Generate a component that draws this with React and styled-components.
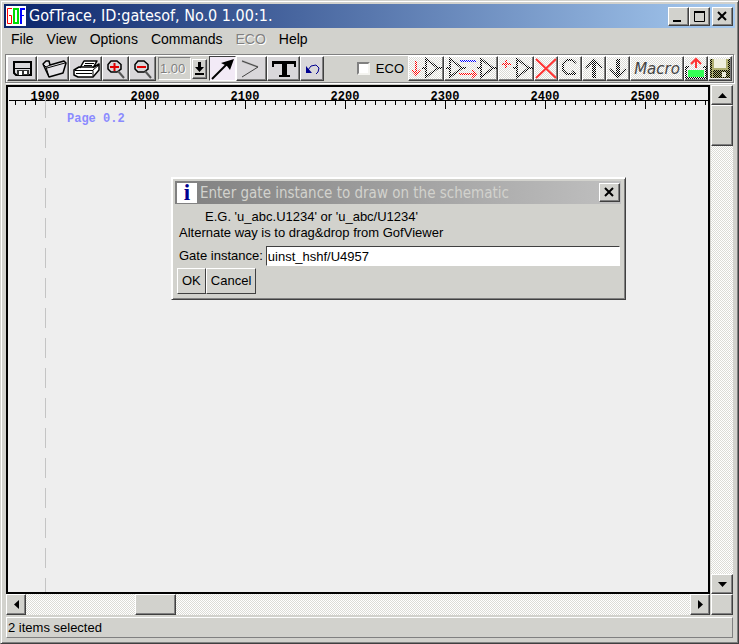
import React from "react";
import styled, { createGlobalStyle, css } from "styled-components";

const FACE = "#d2d2cd";
const DARK = "#404040";
const SHADE = "#808080";

const GlobalStyle = createGlobalStyle`
  * { box-sizing: border-box; }
  body { margin: 0; background: ${FACE}; }
  button, input { font: inherit; color: inherit; }
`;

const raised = css`
  background: ${FACE};
  border: 1px solid;
  border-color: #fff ${DARK} ${DARK} #fff;
  box-shadow: inset -1px -1px 0 ${SHADE};
`;

const Window = styled.main`
  display: flex;
  flex-direction: column;
  min-height: 100vh;
  padding: 2px;
  background: ${FACE};
  border: 1px solid;
  border-color: ${FACE} ${DARK} ${DARK} ${FACE};
  box-shadow: inset 1px 1px 0 #fff, inset -1px -1px 0 ${SHADE};
  font: 13px/16px "Liberation Sans", Arial, sans-serif;
  color: #000;
`;

const TitleBar = styled.header`
  display: flex;
  align-items: center;
  gap: 3px;
  height: 24px;
  margin: 1px 1px 0;
  padding: 0 2px;
  background: linear-gradient(90deg, #0a246a, #a6caf0);
  color: #fff;
`;

const Title = styled.h1`
  flex: 1;
  margin: 0;
  font: 500 ${(p) => p.$size || 16}px/22px "DejaVu Sans Condensed", "DejaVu Sans", sans-serif;
  white-space: nowrap;
`;

const Captions = styled.div`
  display: flex;
  gap: ${(p) => p.$gap || 0}px;
`;

const CaptionButton = styled.button`
  ${raised}
  width: 21px;
  height: 19px;
  padding: 0;
  svg { display: block; }
`;

const MenuBar = styled.nav`
  display: flex;
  gap: 11px;
  height: 26px;
  padding: 0 7px;
  font-size: 14px;
`;

const MenuItem = styled.button`
  padding: 0 1px 4px;
  border: 0;
  background: none;
  &:disabled { color: ${SHADE}; text-shadow: 1px 1px 0 #fff; }
`;

const ToolBar = styled.div`
  display: flex;
  align-items: center;
  height: 29px;
  margin: 0 2px;
  padding: 0 1px;
  border: 1px solid ${SHADE};
  box-shadow: inset 1px 1px 0 #fff, 1px 1px 0 #fff;
`;

const Tool = styled.button`
  ${raised}
  flex: none;
  width: ${(p) => p.$w}px;
  height: 25px;
  padding: 0;
  background: ${(p) => (p.$on ? "#f2eaf6" : "#d9d7da")};
  ${(p) => p.$on && `border-color: ${DARK} #fff #fff ${DARK}; box-shadow: none;`}
  svg { display: block; margin: -1px; }
`;

const DimTool = styled(Tool)`
  background: repeating-conic-gradient(#fff 0 25%, #dadad5 0 50%) 0 0 / 2px 2px;
  font: italic 15px/22px "DejaVu Sans", sans-serif;
  color: #444;
`;

const ScaleInput = styled.input`
  width: 33px;
  height: 23px;
  margin: 0 1px 0 2px;
  padding: 0 1px;
  border: 1px solid;
  border-color: ${SHADE} #fff #fff ${SHADE};
  background: ${FACE};
  &:disabled { color: ${SHADE}; text-shadow: 1px 1px 0 #fff; }
`;

const DropButton = styled.button`
  ${raised}
  width: 15px;
  height: 20px;
  margin-right: 2px;
  padding: 0;
  svg { display: block; }
`;

const EcoLabel = styled.label`
  display: flex;
  align-items: center;
  gap: 6px;
  margin-left: auto;
  padding-right: 4px;
`;

const EcoBox = styled.input`
  appearance: none;
  width: 13px;
  height: 13px;
  margin: 0;
  background: #fff;
  border: 2px solid;
  border-color: ${SHADE} #f4f4f0 #f4f4f0 ${SHADE};
`;

const Workspace = styled.div`
  flex: 1;
  display: grid;
  grid-template-columns: minmax(0, 1fr) 22px;
  grid-template-rows: minmax(0, 1fr) 21px;
  column-gap: 1px;
  margin: 2px 3px 0;
`;

const Canvas = styled.section`
  position: relative;
  overflow: hidden;
  border: 2px solid #000;
  background: #eee;
  font: bold 12px/14px "Liberation Mono", monospace;
`;

const Ruler = styled.div`
  display: flex;
  height: 22px;
  margin-left: -13px;
  padding-top: 3px;
  overflow: hidden;
  background:
    linear-gradient(#000, #000) 14px 13px / 100% 1px no-repeat,
    repeating-linear-gradient(90deg, #000 0 1px, transparent 1px 100px) 50px 13px / 100% 10px no-repeat,
    repeating-linear-gradient(90deg, #000 0 1px, transparent 1px 10px) 20px 13px / 100% 5px no-repeat;
`;

const Mark = styled.span`
  flex: 0 0 100px;
  text-align: center;
`;

const PageEdge = styled.div`
  position: absolute;
  top: 11px;
  bottom: 0;
  left: 37px;
  width: 1px;
  background: repeating-linear-gradient(#c4c4c4 0 20px, transparent 20px 30px);
`;

const PageName = styled.div`
  margin: 3px 0 0 59px;
  color: #8a8aff;
`;

const ScrollBar = styled.div`
  display: flex;
  flex-direction: ${(p) => (p.$vertical ? "column" : "row")};
  background: repeating-conic-gradient(#fff 0 25%, #dcdcd6 0 50%) 0 0 / 2px 2px;
`;

const ScrollArrow = styled.button`
  ${raised}
  flex: 0 0 20px;
  display: grid;
  place-items: center;
  padding: 0;
`;

const Thumb = styled.div`
  ${raised}
  flex: 0 0 41px;
`;

const Trough = styled.div`
  flex: ${(p) => p.$size || "1"};
`;

const Corner = styled.div`
  ${raised}
`;

const StatusBar = styled.footer`
  height: 21px;
  margin: 2px 3px 3px;
  padding: 2px 1px;
  border: 1px solid;
  border-color: #fff ${SHADE} ${SHADE} #fff;
`;

const Dialog = styled.section`
  ${raised}
  position: absolute;
  top: 90px;
  left: 163px;
  width: 455px;
  padding: 3px 4px 5px 3px;
  box-shadow: inset 1px 1px 0 #fff, inset -1px -1px 0 ${SHADE};
  font: 13px/16px "Liberation Sans", Arial, sans-serif;
`;

const DialogTitleBar = styled(TitleBar)`
  margin: 0;
  height: 23px;
  padding-right: 1px;
  background: linear-gradient(90deg, #808080, #c0c0c0);
  color: ${FACE};
`;

const InfoIcon = styled.span`
  width: 20px;
  height: 20px;
  background: #fff;
  color: #000090;
  text-align: center;
  font: bold 23px/20px "Liberation Serif", serif;
`;

const Hint = styled.p`
  margin: 0 0 0 4px;
  padding-top: ${(p) => (p.$first ? 5 : 0)}px;
  text-indent: ${(p) => (p.$first ? 26 : 0)}px;
`;

const Field = styled.div`
  display: flex;
  align-items: center;
  gap: 3px;
  margin: 5px 1px 2px 4px;
`;

const GateInput = styled.input`
  flex: 1;
  min-width: 0;
  height: 20px;
  padding: 0 1px;
  border: 1px solid;
  border-color: ${DARK} #fff #fff ${DARK};
  background: #fff;
  outline: 0;
`;

const Actions = styled.div`
  display: flex;
  margin-left: 2px;
`;

const ActionButton = styled.button`
  ${raised}
  height: 26px;
  padding: 0 4px;
  box-shadow: none;
`;

const PatternDefs = styled.svg`
  position: absolute;
`;

const tones = { black: "#000", red: "#f00", blue: "#00f" };

function Stipples() {
  return (
    <PatternDefs width="0" height="0" aria-hidden="true">
      <defs>
        {Object.entries(tones).map(([id, color]) => (
          <pattern key={id} id={`dots-${id}`} width="2" height="2" patternUnits="userSpaceOnUse">
            <rect width="1" height="1" fill={color} />
            <rect x="1" y="1" width="1" height="1" fill={color} />
          </pattern>
        ))}
      </defs>
    </PatternDefs>
  );
}

function Svg({ w, h = 25, children, ...rest }) {
  return (
    <svg width={w} height={h} viewBox={`0 0 ${w} ${h}`} fill="none" stroke="#000" aria-hidden="true" {...rest}>
      {children}
    </svg>
  );
}

const dots = (c) => ({ stroke: `url(#dots-${c})`, strokeWidth: 2 });

function Gate({ x }) {
  return <path {...dots("black")} d={`M${x - 4} 12H${x}M${x} 3V21L${x + 12} 12ZM${x + 12} 12H${x + 16}`} />;
}

function CloseGlyph() {
  return (
    <Svg w={19} h={17}>
      <path strokeWidth="2" d="M5 4L13 12M13 4L5 12" />
    </Svg>
  );
}

function Lens({ plus }) {
  return (
    <Svg w={27}>
      <path strokeWidth="1.5" d="M9 5H15L19 8.500V13L15 16H9L6 13V8.500Z" />
      <path stroke="#555" strokeWidth="2" d="M16 15L22 22" />
      <path stroke="#e00000" strokeWidth="2" d={plus ? "M8 11H17M12.500 7V15" : "M8 11H17"} />
    </Svg>
  );
}

const arrows = { up: "M0 6H9L4.5 1Z", down: "M0 1H9L4.5 6Z", left: "M6 0V9L1 4.5Z", right: "M1 0V9L6 4.5Z" };

function Arrow({ dir }) {
  const upright = dir === "up" || dir === "down";
  return (
    <ScrollArrow aria-label={`Scroll ${dir}`}>
      <Svg w={upright ? 9 : 7} h={upright ? 7 : 9} fill="#000" stroke="none">
        <path d={arrows[dir]} />
      </Svg>
    </ScrollArrow>
  );
}

function Logo() {
  return (
    <Svg w={20} h={20}>
      <rect width="20" height="20" fill="#fff" stroke="none" />
      <polyline stroke="#f00" points="6,2.5 1.5,2.5 1.5,17.5 5.5,17.5 5.5,9.5 3,9.5" />
      <rect stroke="#0d0" x="8" y="3" width="4" height="14" strokeWidth="2" />
      <polyline stroke="#00f" strokeWidth="2" points="19,3 15,3 15,18" />
      <line stroke="#00f" x1="15" x2="18" y1="9.5" y2="9.5" />
    </Svg>
  );
}

export default function App() {
  return (
    <Window>
      <GlobalStyle />
      <Stipples />
      <TitleBar>
        <Logo />
        <Title>GofTrace, ID:gatesof, No.0 1.00:1.</Title>
        <Captions $gap={2}>
          <Captions>
            <CaptionButton aria-label="Minimize">
              <Svg w={19} h={17}><path strokeWidth="2" d="M4 13H12" /></Svg>
            </CaptionButton>
            <CaptionButton aria-label="Maximize">
              <Svg w={19} h={17}><path d="M4.5 3V13.5H14.5V3" /><path strokeWidth="2" d="M4 4H15" /></Svg>
            </CaptionButton>
          </Captions>
          <CaptionButton aria-label="Close"><CloseGlyph /></CaptionButton>
        </Captions>
      </TitleBar>

      <MenuBar>
        <MenuItem>File</MenuItem>
        <MenuItem>View</MenuItem>
        <MenuItem>Options</MenuItem>
        <MenuItem>Commands</MenuItem>
        <MenuItem disabled>ECO</MenuItem>
        <MenuItem>Help</MenuItem>
      </MenuBar>

      <ToolBar role="toolbar">
        <Tool $w={30} aria-label="Save">
          <Svg w={30}>
            <path fill="#d9d7da" strokeWidth="2" d="M7 6H24V19H9L7 17Z" />
            <path d="M8 12.5H23" />
            <path fill="#333" stroke="none" d="M10 14H22V19H10Z" />
            <path fill="#fff" stroke="none" d="M12 15H15V19H12ZM17 15H20V18H17Z" />
          </Svg>
        </Tool>
        <Tool $w={32} aria-label="Open">
          <Svg w={32}>
            <path fill="#e6e4e8" strokeWidth="1.5" strokeLinejoin="round" d="M6 8L9 5H12L13 9L27 5L29 7L26 17L12 21Z" />
            <path d="M6 8L9 11L12 21M9 11L13 9M10 12L28 7" />
          </Svg>
        </Tool>
        <Tool $w={33} aria-label="Print">
          <Svg w={33}>
            <path fill="#fff" strokeWidth="1.5" strokeLinejoin="round" d="M11 12L15 5H28L24 12M5 14L10 11H25L30 8V14L24 21H9L5 19Z" />
            <path d="M16 7.5H25M15 9.5H23M6 14.5H24V20M24 14L30 9M7 17.5H23" />
          </Svg>
        </Tool>
        <Tool $w={27} aria-label="Zoom in"><Lens plus /></Tool>
        <Tool $w={27} aria-label="Zoom out"><Lens /></Tool>
        <ScaleInput aria-label="Scale" defaultValue="1.00" disabled />
        <DropButton aria-label="Choose scale">
          <Svg w={13} h={18}>
            <path fill="#000" stroke="none" d="M5 2H8V7H11L6.5 12L2 7H5ZM2 13H11V15H2Z" />
          </Svg>
        </DropButton>
        <Tool $w={27} $on aria-label="Select">
          <Svg w={27}>
            <path strokeWidth="2" d="M3 23L19 7" />
            <path fill="#000" stroke="none" d="M25 3L21 14L18 10L12 7Z" />
          </Svg>
        </Tool>
        <Tool $w={31} aria-label="Probe">
          <Svg w={31}>
            <path stroke="#aaa" strokeWidth="2" d="M6 5L22 11" />
            <path stroke="#444" d="M6 5L22 11L6 21" />
          </Svg>
        </Tool>
        <Tool $w={33} aria-label="Text">
          <Svg w={33} stroke="none" fill="#000">
            <rect x="5" y="5" width="24" height="3" />
            <rect x="5" y="5" width="2" height="6" />
            <rect x="27" y="5" width="2" height="6" />
            <rect x="15" y="5" width="5" height="16" />
            <rect x="12" y="19" width="11" height="2" />
          </Svg>
        </Tool>
        <Tool $w={24} aria-label="Undo">
          <Svg w={24}>
            <path stroke="#000090" d="M8 14L11 10L16 9L19 12L18 16L16 18" />
            <path fill="#000090" stroke="none" d="M6 10V17H12Z" />
          </Svg>
        </Tool>

        <EcoLabel><EcoBox type="checkbox" />ECO</EcoLabel>
        <DimTool $w={36} disabled aria-label="Insert gate">
          <Svg w={36}>
            <path {...dots("red")} d="M8 5V18M4 14L8 19L12 14" />
            <Gate x={18} />
          </Svg>
        </DimTool>
        <DimTool $w={54} disabled aria-label="Insert between gates">
          <Svg w={54}>
            <Gate x={6} />
            <Gate x={37} />
            <path {...dots("blue")} d="M16 5H32" />
            <path {...dots("red")} d="M15 18H32M28 14L32 18L28 22" />
          </Svg>
        </DimTool>
        <DimTool $w={36} disabled aria-label="Add gate">
          <Svg w={36}>
            <path {...dots("red")} d="M4 8H13M8 4V12" />
            <Gate x={19} />
          </Svg>
        </DimTool>
        <DimTool $w={24} disabled aria-label="Delete">
          <Svg w={24}><path stroke="#f33" strokeWidth="2" d="M2 3L22 22M22 3L2 22" /></Svg>
        </DimTool>
        <DimTool $w={24} disabled aria-label="Redo">
          <Svg w={24}><path {...dots("black")} d="M18 7L14 4H9L5 8V14L9 18H18M14 15L18 18" /></Svg>
        </DimTool>
        <DimTool $w={24} disabled aria-label="Up">
          <Svg w={24}>
            <path {...dots("black")} d="M4 12L12 4L20 12" />
            <path {...dots("black")} strokeWidth={4} d="M12 4V22" />
          </Svg>
        </DimTool>
        <DimTool $w={24} disabled aria-label="Down">
          <Svg w={24}>
            <path {...dots("black")} d="M4 13L12 21L20 13" />
            <path {...dots("black")} strokeWidth={4} d="M12 3V21" />
          </Svg>
        </DimTool>
        <DimTool $w={54} disabled>Macro</DimTool>
        <DimTool $w={24} disabled aria-label="Export">
          <Svg w={24}>
            <path fill="#3f5" stroke="none" d="M4 14H20V21H4Z" />
            <path {...dots("black")} d="M5 11H2V22H22V11H19" />
            <path stroke="#f33" strokeWidth="2" d="M12 3V12M7 8L12 3L17 8" />
          </Svg>
        </DimTool>
        <DimTool $w={24} disabled aria-label="Save changes">
          <Svg w={24}>
            <path fill="#b0b070" stroke="none" d="M2 3H22V22H2Z" />
            <path fill="url(#dots-black)" stroke="none" d="M2 3H4V22H2ZM20 3H22V22H20ZM5 14H20V22H5Z" />
            <path fill="#eeeedc" stroke="none" d="M6 3H18V12H6ZM14 16H18V21H14Z" />
          </Svg>
        </DimTool>
      </ToolBar>

      <Workspace>
        <Canvas>
          <Ruler>
            {[1900, 2000, 2100, 2200, 2300, 2400, 2500].map((n) => <Mark key={n}>{n}</Mark>)}
          </Ruler>
          <PageEdge />
          <PageName>Page 0.2</PageName>

          <Dialog role="dialog" aria-labelledby="dialog-title">
            <DialogTitleBar>
              <InfoIcon>i</InfoIcon>
              <Title as="h2" $size={15} id="dialog-title">Enter gate instance to draw on the schematic</Title>
              <CaptionButton aria-label="Close"><CloseGlyph /></CaptionButton>
            </DialogTitleBar>
            <Hint $first>E.G. 'u_abc.U1234' or 'u_abc/U1234'</Hint>
            <Hint>Alternate way is to drag&amp;drop from GofViewer</Hint>
            <Field>
              <label htmlFor="gate">Gate instance:</label>
              <GateInput id="gate" defaultValue="uinst_hshf/U4957" />
            </Field>
            <Actions>
              <ActionButton>OK</ActionButton>
              <ActionButton>Cancel</ActionButton>
            </Actions>
          </Dialog>
        </Canvas>

        <ScrollBar $vertical>
          <Arrow dir="up" />
          <Thumb />
          <Trough />
          <Arrow dir="down" />
        </ScrollBar>
        <ScrollBar>
          <Arrow dir="left" />
          <Trough $size="0 0 109px" />
          <Thumb />
          <Trough />
          <Arrow dir="right" />
        </ScrollBar>
        <Corner />
      </Workspace>

      <StatusBar>2 items selected</StatusBar>
    </Window>
  );
}
